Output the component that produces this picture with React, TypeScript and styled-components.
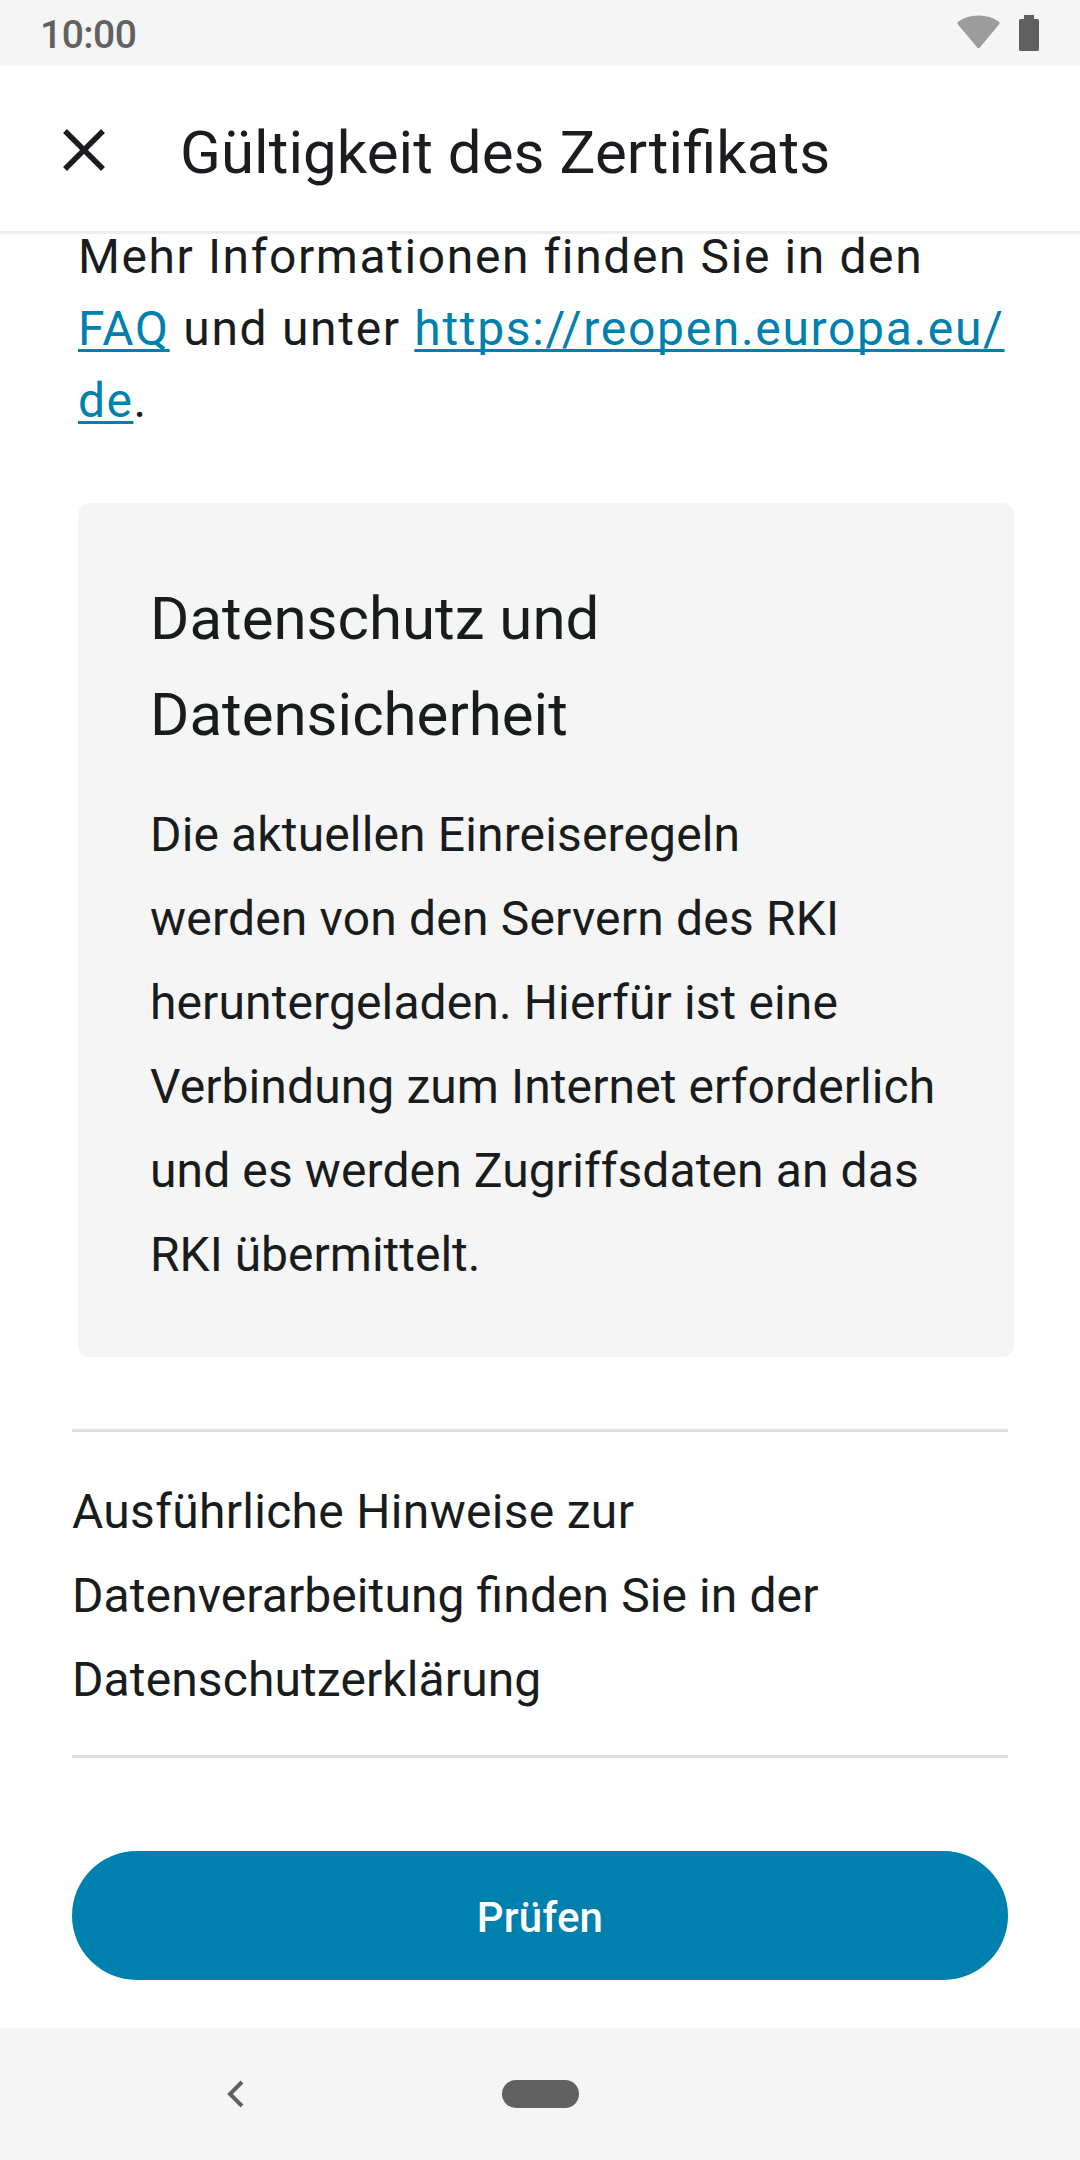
import React from 'react';
import styled, { createGlobalStyle } from 'styled-components';

const Global = createGlobalStyle`
  * { box-sizing: border-box; }
  body { margin: 0; background: #fff; }
`;
const Screen = styled.div`
  width: 1080px; height: 2160px; display: flex; flex-direction: column;
  font-family: Roboto, sans-serif; color: #191c1d; background: #fff; overflow: hidden;
`;
const StatusBar = styled.header`
  height: 66px; flex: none; background: #f5f5f5; display: flex; align-items: center;
  justify-content: space-between; padding: 0 41px 0 40px;
`;
const Clock = styled.span`
  font-size: 39px; line-height: 46px; font-weight: 500; letter-spacing: -0.5px; color: #616161; padding-top: 3px;
`;
const StatusIcons = styled.div`display: flex; align-items: flex-start; gap: 19px;`;
const TitleBar = styled.div`
  height: 168px; flex: none; border-bottom: 3px solid #eee; display: flex; align-items: center;
  padding: 3px 0 0 63px; gap: 75px; color: #1c1b1f;
`;
const Title = styled.h1`
  margin: 6px 0 0; font-size: 60px; line-height: 72px; font-weight: 400; white-space: nowrap;
  letter-spacing: 0.06px; font-feature-settings: "liga" 1;
`;
const Content = styled.main`flex: 1; min-height: 0; display: flex; flex-direction: column; padding: 0 72px;`;
const Info = styled.p`
  margin: -13px 0 0 6px; font-size: 48px; line-height: 72px; white-space: nowrap;
`;
const Line = styled.span<{ $spacing?: number }>`
  display: block; letter-spacing: ${({ $spacing = 0 }) => $spacing}px;
`;
const TextLine = styled(Line)`font-feature-settings: "liga" 1;`;
const Link = styled.a`
  color: #0080ae; text-decoration: underline; text-decoration-thickness: 3px;
  text-underline-offset: 4px; text-decoration-skip-ink: none;
`;
const Card = styled.section`
  margin: 66px -6px 0 6px; height: 854px; background: #f5f5f5; border-radius: 12px; padding: 68px 72px 0;
`;
const CardTitle = styled.h2`margin: 0; font-size: 60px; line-height: 96px; font-weight: 400;`;
const Body = styled.p`margin: 0; font-size: 48px; line-height: 84px; white-space: nowrap;`;
const CardBody = styled(Body)`margin-top: 30px;`;
const Notice = styled.section`
  margin-top: 72px; height: 329px; border-top: 3px solid #dedede; border-bottom: 3px solid #dedede; padding-top: 38px;
`;
const CheckButton = styled.button`
  margin-top: 93px; height: 129px; border: 0; border-radius: 65px; background: #0080ae; color: #fff;
  font: 500 42px/50px Roboto, sans-serif; letter-spacing: 0.2px; padding: 5px 0 0;
`;
const NavBar = styled.nav`
  height: 132px; flex: none; background: #f5f5f5; display: grid; grid-template-columns: 470px 141px 1fr;
  align-items: center; justify-items: center;
`;
const HomePill = styled.div`width: 77px; height: 28px; border-radius: 14px; background: #616161;`;

export default function App() {
  return (
    <Screen>
      <Global />
      <StatusBar>
        <Clock>10:00</Clock>
        <StatusIcons>
          <svg width="43" height="36" viewBox="0 0 43 36">
            <path d="M1 9.500Q-0.300 8 1.200 6.800Q9.500 0.500 21.500 0.500T41.800 6.800Q43.300 8 42 9.500L23 32.300Q21.500 34 20 32.300Z" fill="#9c9c9c" />
          </svg>
          <svg width="20" height="36" viewBox="0 0 20 36">
            <path d="M5 0h10v4h3.500q1.500 0 1.500 1.500v29q0 1.500-1.500 1.500h-17Q0 36 0 34.500v-29Q0 4 1.500 4H5z" fill="#5f615f" />
          </svg>
        </StatusIcons>
      </StatusBar>
      <TitleBar>
        <svg width="42" height="42" viewBox="0 0 42 42"><path d="M2 2L40 40M40 2L2 40" stroke="currentColor" strokeWidth="5.400" /></svg>
        <Title>Gültigkeit des Zertifikats</Title>
      </TitleBar>
      <Content>
        <Info>
          <Line $spacing={1.6}>Mehr Informationen finden Sie in den</Line>
          <Line $spacing={1.68}><Link>FAQ</Link> und unter <Link>https://reopen.europa.eu/</Link></Line>
          <Line $spacing={1.44}><Link>de</Link>.</Line>
        </Info>
        <Card>
          <CardTitle>Datenschutz und<br />Datensicherheit</CardTitle>
          <CardBody>
            <TextLine $spacing={0.14}>Die aktuellen Einreiseregeln</TextLine>
            <TextLine $spacing={0.19}>werden von den Servern des RKI</TextLine>
            <TextLine $spacing={0.11}>heruntergeladen. Hierfür ist eine</TextLine>
            <TextLine $spacing={0.1}>Verbindung zum Internet erforderlich</TextLine>
            <TextLine $spacing={0.1}>und es werden Zugriffsdaten an das</TextLine>
            <TextLine>RKI übermittelt.</TextLine>
          </CardBody>
        </Card>
        <Notice>
          <Body>
            <TextLine $spacing={0.3}>Ausführliche Hinweise zur</TextLine>
            <TextLine $spacing={0.09}>Datenverarbeitung finden Sie in der</TextLine>
            <TextLine $spacing={0.11}>Datenschutzerklärung</TextLine>
          </Body>
        </Notice>
        <CheckButton>Prüfen</CheckButton>
      </Content>
      <NavBar>
        <svg width="17" height="28" viewBox="0 0 17 28"><path d="M15 2L3 14L15 26" fill="none" stroke="#616161" strokeWidth="4" /></svg>
        <HomePill />
      </NavBar>
    </Screen>
  );
}
